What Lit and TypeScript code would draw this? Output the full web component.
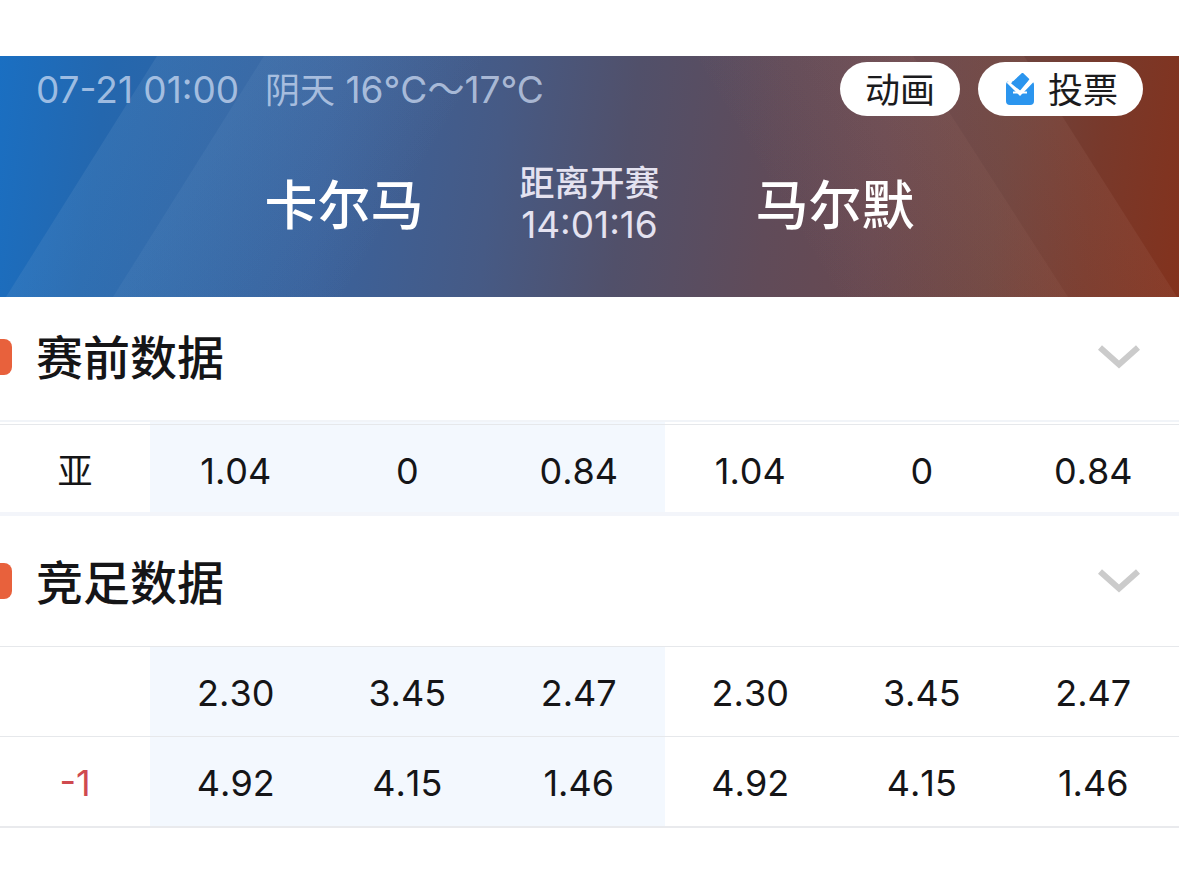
import { LitElement, html, css, svg, nothing } from "lit";
import { customElement, property, state } from "lit/decorators.js";

interface OddsRow {
  label: string;
  negative?: boolean;
  values: string[];
}

@customElement("match-header")
class MatchHeader extends LitElement {
  static styles = css`
    :host {
      display: block;
      position: relative;
      color: #fff;
      background: linear-gradient(
        97deg,
        #1a6fc2 0%,
        #2467ae 9%,
        #3a629c 28%,
        #465a85 42%,
        #51506a 53%,
        #604b59 65%,
        #684951 74%,
        #6d443f 84%,
        #78392b 92%,
        #83321d 100%
      );
    }
    .rays {
      position: absolute;
      inset: 0;
      width: 100%;
      height: 100%;
    }
    .content {
      position: relative;
      padding: 5px 36px 51px;
    }
    .bar {
      display: flex;
      align-items: center;
      gap: 18px;
    }
    .info {
      display: flex;
      align-items: baseline;
      flex: 1;
      gap: 26px;
      padding-top: 2px;
      color: rgba(214, 226, 248, 0.7);
      font-size: 37px;
      line-height: 54px;
    }
    .sky {
      font-size: 35px;
    }
    .pill {
      display: flex;
      align-items: center;
      justify-content: center;
      gap: 13px;
      height: 54px;
      padding: 2px 25px 0;
      border: 0;
      border-radius: 27px;
      background: #fff;
      color: #1b1b1d;
      font: inherit;
      font-size: 35px;
      line-height: 52px;
    }
    .vote {
      width: 32px;
      height: 34px;
    }
    .match {
      display: grid;
      grid-template-columns: 1fr auto 1fr;
      align-items: center;
      gap: 96px;
      margin-top: 45px;
    }
    .team {
      margin: 0;
      padding-top: 4px;
      font-size: 53px;
      font-weight: 500;
      line-height: 80px;
    }
    .home {
      text-align: right;
    }
    .clock {
      text-align: center;
      font-size: 37px;
      line-height: 42px;
      color: #e4e2f0;
    }
    .caption {
      font-size: 35px;
      font-weight: 500;
    }
  `;

  render() {
    return html`
      <svg class="rays" viewBox="0 0 1179 241" preserveAspectRatio="none" aria-hidden="true">
        <defs>
          <linearGradient id="l" gradientUnits="userSpaceOnUse" x1="80" y1="120" x2="330" y2="270">
            <stop offset="0" stop-color="#7fa8d0" stop-opacity=".15" />
            <stop offset="1" stop-color="#7fa8d0" stop-opacity="0" />
          </linearGradient>
          <linearGradient id="r" gradientUnits="userSpaceOnUse" x1="1100" y1="120" x2="850" y2="270">
            <stop offset="0" stop-color="#b88478" stop-opacity=".12" />
            <stop offset="1" stop-color="#b88478" stop-opacity="0" />
          </linearGradient>
        </defs>
        <path d="M157 0H600V241H6z" fill="url(#l)" />
        <path d="M264 0H600V241H113z" fill="url(#l)" />
        <path d="M913 0H600V241H1068z" fill="url(#r)" />
        <path d="M1024 0H600V241H1177z" fill="url(#r)" />
      </svg>
      <div class="content">
        <div class="bar">
          <div class="info">
            <time>07-21 01:00</time>
            <span><span class="sky">阴天</span> 16°C～17°C</span>
          </div>
          <button class="pill" type="button">动画</button>
          <button class="pill" type="button">
            <svg class="vote" viewBox="0 1 32 34" aria-hidden="true">
              <rect x="3" y="9" width="28" height="24" rx="4" fill="#2b95ee" />
              <path d="M5.500 9L17 20.500L31 6" fill="none" stroke="#fff" stroke-width="5" />
              <path d="M19.500 1.500L25.500 7.200L17 17.500L9 11.200z" fill="#2b95ee" stroke="#2b95ee" stroke-width="1.500" stroke-linejoin="round" />
              <path d="M10 20.500H24" stroke="#fff" stroke-width="2" />
            </svg>
            投票
          </button>
        </div>
        <div class="match">
          <h1 class="team home">卡尔马</h1>
          <div class="clock">
            <div class="caption">距离开赛</div>
            <div>14:01:16</div>
          </div>
          <h1 class="team">马尔默</h1>
        </div>
      </div>
    `;
  }
}

@customElement("odds-section")
class OddsSection extends LitElement {
  @property() heading = "";
  @property({ type: Boolean }) framed = false;
  @property({ attribute: false }) rows: OddsRow[] = [];
  @state() private open = true;

  static styles = css`
    :host {
      display: block;
    }
    .head {
      display: flex;
      align-items: center;
      box-sizing: border-box;
      height: 130px;
      padding-right: 39px;
    }
    .framed .head {
      height: 123px;
      padding-bottom: 4px;
    }
    .framed {
      border-bottom: 4px solid #f3f5fa;
    }
    .marker {
      width: 12px;
      height: 36px;
      border-radius: 0 8px 8px 0;
      background: #e8613c;
    }
    .title {
      flex: 1;
      margin: 3px 0 0 24px;
      font-size: 47px;
      font-weight: 500;
      line-height: 70px;
    }
    .toggle {
      display: flex;
      padding: 0;
      border: 0;
      background: none;
    }
    .chevron {
      width: 42px;
      height: 24px;
    }
    .closed {
      transform: rotate(180deg);
    }
    .odds {
      width: 100%;
      table-layout: fixed;
      border-collapse: collapse;
      border-bottom: 2px solid #e9eaed;
    }
    .framed .odds {
      border-bottom: 0;
    }
    .label-col {
      width: 150px;
    }
    .first {
      background-color: #f3f8fe;
    }
    th,
    td {
      height: 87px;
      padding: 2px 0 0;
      border-top: 1px solid #e6e8eb;
      font-weight: 400;
      font-kerning: none;
      text-align: center;
      line-height: 44px;
    }
    th {
      font-size: 35px;
    }
    .framed th,
    .framed td {
      height: 83px;
      padding-top: 9px;
      border-top: 0;
      background-image: linear-gradient(
        #f1f4f8 2px,
        transparent 2px,
        transparent 4px,
        #e6e8eb 4px,
        #e6e8eb 5px,
        transparent 5px
      );
    }
    .negative {
      color: #cf4a4f;
      font-size: 36px;
    }
  `;

  render() {
    return html`
      <section class=${this.framed ? "framed" : "plain"}>
        <header class="head">
          <span class="marker"></span>
          <h2 class="title">${this.heading}</h2>
          <button
            class="toggle"
            type="button"
            aria-label=${this.heading}
            aria-expanded=${this.open}
            @click=${() => (this.open = !this.open)}
          >
            <svg class="chevron ${this.open ? "" : "closed"}" viewBox="0 0 42 24">
              ${svg`<path d="M2 2.500L21 19.500L40 2.500" fill="none" stroke="#cbcbcb" stroke-width="6" />`}
            </svg>
          </button>
        </header>
        ${this.open
          ? html`<table class="odds">
              <colgroup>
                <col class="label-col" />
                <col span="6" />
              </colgroup>
              <tbody>
                ${this.rows.map(
                  (row) => html`<tr>
                    <th scope="row" class=${row.negative ? "negative" : ""}>${row.label}</th>
                    ${row.values.map((v, i) => html`<td class=${i < 3 ? "first" : ""}>${v}</td>`)}
                  </tr>`
                )}
              </tbody>
            </table>`
          : nothing}
      </section>
    `;
  }
}

@customElement("app-root")
class AppRoot extends LitElement {
  static styles = css`
    :host {
      display: block;
      box-sizing: border-box;
      min-height: 100vh;
      padding-top: 56px;
      background: #fff;
      color: #151517;
      font-family: Inter, "Noto Sans CJK SC", sans-serif;
      font-size: 36px;
    }
  `;

  private handicap: OddsRow[] = [
    { label: "亚", values: ["1.04", "0", "0.84", "1.04", "0", "0.84"] },
  ];

  private lottery: OddsRow[] = [
    { label: "", values: ["2.30", "3.45", "2.47", "2.30", "3.45", "2.47"] },
    { label: "-1", negative: true, values: ["4.92", "4.15", "1.46", "4.92", "4.15", "1.46"] },
  ];

  render() {
    return html`
      <match-header></match-header>
      <main>
        <odds-section heading="赛前数据" framed .rows=${this.handicap}></odds-section>
        <odds-section heading="竞足数据" .rows=${this.lottery}></odds-section>
      </main>
    `;
  }
}
